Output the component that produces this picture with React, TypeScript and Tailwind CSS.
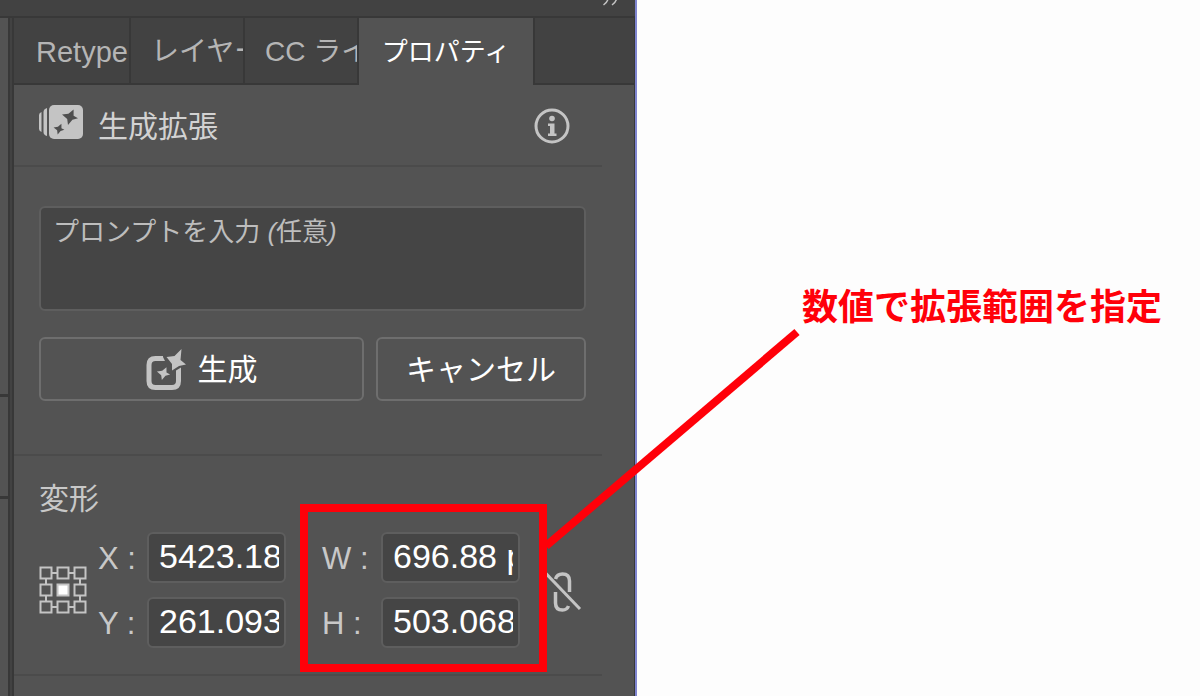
import type { ReactNode } from "react"
import { useState } from "react"

const tabs = [
  { id: "retype", label: "Retype", title: "Retype", className: "w-[117px] pl-[22px] text-[29px]" },
  { id: "layers", label: "レイヤー", title: "レイヤー", className: "w-[114px] pl-5 text-[28px]" },
  { id: "libraries", label: "CC ライ", title: "CC ライブラリ", className: "w-[114px] pl-5 text-[28px]" },
]

const SPARK = "M4.5 -9.5 L4.5 -1.5 L10 1.5 L3 3.5 L-2.5 10 L-3.5 2.5 L-10 -3 L-2 -4 Z"

function GenerativeExpandIcon() {
  return (
    <svg className="h-9 w-[46px] shrink-0" viewBox="0 0 46 36" aria-hidden="true">
      <path d="M2.5 9 Q0 10 0 12 V26 Q0 28 2.5 29 Z" fill="#c4c4c4" />
      <path d="M8 5 Q4.5 6 4.5 9 V29 Q4.5 32 8 33 Z" fill="#c4c4c4" />
      <rect x="10" y="2" width="34" height="34" rx="5" fill="#c4c4c4" />
      <path d={SPARK} transform="translate(31 14) scale(.8)" fill="#4f4f4f" />
      <path d={SPARK} transform="translate(20 26) scale(.54)" fill="#4f4f4f" />
    </svg>
  )
}

function GenerateIcon() {
  return (
    <svg className="h-[42px] w-10 shrink-0" viewBox="0 0 40 42" aria-hidden="true">
      <path
        d="M17 9.5 H9.5 Q3 9.5 3 16 V32 Q3 38.5 9.5 38.5 H26 Q32.5 38.5 32.5 32 V22"
        fill="none"
        stroke="#c4c4c4"
        strokeWidth="5"
      />
      <path d="M14 7 H16.5 L19 12 H14 Z" fill="#c4c4c4" />
      <path d="M30 23 V21.5 L35 18.5 V23 Z" fill="#c4c4c4" />
      <path d="M35.5 0 L34.5 11 L40 15.5 L33 17 L26 21.5 L26 15 L20.5 8 L28.5 7 Z" fill="#c4c4c4" />
      <path d={SPARK} transform="translate(17.5 24.5) scale(.66)" fill="#c4c4c4" />
    </svg>
  )
}

function InfoIcon() {
  return (
    <svg className="h-9 w-9" viewBox="0 0 36 36" fill="none" aria-hidden="true">
      <circle cx="18" cy="18" r="16" stroke="#c4c4c4" strokeWidth="3" />
      <circle cx="18" cy="10.5" r="2.8" fill="#c4c4c4" />
      <path d="M14 15.5 H20.5 V25.5 H22.5 V28 H14 V25.5 H16 V18 H14 Z" fill="#c4c4c4" />
    </svg>
  )
}

function ReferencePointIcon() {
  const steps = [2, 19, 36]
  return (
    <svg className="h-12 w-12" viewBox="0 0 48 48" fill="none" aria-hidden="true">
      <rect x="7" y="7" width="34" height="34" stroke="#c4c4c4" strokeWidth="2" />
      {steps.map((y) =>
        steps.map((x) => {
          const center = x === 19 && y === 19
          return (
            <rect
              key={`${x}-${y}`}
              x={x - 0.5}
              y={y - 0.5}
              width="11"
              height="11"
              fill={center ? "#ffffff" : "#535353"}
              stroke="#c4c4c4"
              strokeWidth="2"
            />
          )
        }),
      )}
    </svg>
  )
}

function UnlinkIcon() {
  return (
    <svg className="h-11 w-9" viewBox="0 0 36 44" fill="none" stroke="#c4c4c4" aria-hidden="true">
      <path d="M9.5 9 Q11 4 16.5 4 Q23.5 4 23.5 11 V22" strokeWidth="3.5" />
      <path d="M9.5 22 V33 Q9.5 40 16.5 40 Q21 40 22.5 36" strokeWidth="3.5" />
      <path d="M0 3.5 L34 39" strokeWidth="3" />
    </svg>
  )
}

function Section({ children, className }: { children: ReactNode; className: string }) {
  return <section className={`mr-8 border-b-2 border-[#4b4b4b] pr-4 pl-[25px] ${className}`}>{children}</section>
}

function NumberField({ id, label, value, labelWidth }: { id: string; label: string; value: string; labelWidth: string }) {
  const [text, setText] = useState(value)
  return (
    <div className="flex items-center">
      <label htmlFor={id} className={`shrink-0 pt-0.5 text-[31px] leading-none whitespace-pre text-[#c8c8c8] ${labelWidth}`}>
        {label} :
      </label>
      <input
        id={id}
        value={text}
        onChange={(e) => setText(e.target.value)}
        className="h-[51px] w-[139px] rounded-md border-2 border-[#5e5e5e] bg-[#454545] pr-[5px] pb-0.5 pl-[10px] text-[34px] leading-none text-white outline-none"
      />
    </div>
  )
}

export default function App() {
  const [active, setActive] = useState("properties")

  return (
    <div className="grid min-h-screen grid-cols-[637fr_563fr] overflow-hidden bg-[#fdfdfd] font-['Liberation_Sans','Noto_Sans_CJK_JP',sans-serif]">
      <aside className="relative z-10 flex flex-col border-r-2 border-[#7f85d0] bg-[#383838]">
        <div className="flex h-4 justify-end bg-[#424242] pr-[17px]">
          <button aria-label="パネルを折りたたむ" className="h-[6px] w-4">
            <svg className="h-[6px] w-4" viewBox="0 0 16 6" fill="none" stroke="#c4c4c4" strokeWidth="1.5">
              <path d="M6 -1 Q5.5 2 1.5 5" />
              <path d="M14.5 -1 Q14 2 10 5" />
            </svg>
          </button>
        </div>

        <div className="flex grow gap-[2px] pt-[2px]">
          {/* neighbouring dock column */}
          <div className="flex w-2 flex-col gap-[3px]">
            <div className="h-[376px] bg-[#535353]" />
            <div className="h-[99px] bg-[#535353]" />
            <div className="grow bg-[#535353]" />
          </div>
          <div className="w-[2px] bg-[#424242]" />

          <div className="mr-px flex min-w-0 grow flex-col bg-[#535353]">
            <div role="tablist" className="flex h-[67px] leading-none text-[#b5b5b5]">
              {tabs.map((tab) => (
                <button
                  key={tab.id}
                  role="tab"
                  aria-label={tab.title}
                  aria-selected={active === tab.id}
                  onClick={() => setActive(tab.id)}
                  className={`shrink-0 overflow-hidden border-r-2 border-b-2 border-[#383838] bg-[#424242] pt-0.5 text-left leading-[36px] whitespace-nowrap ${tab.className}`}
                >
                  {tab.label}
                </button>
              ))}
              <button
                role="tab"
                aria-selected={active === "properties"}
                onClick={() => setActive("properties")}
                className="w-[174px] shrink-0 text-[26px] text-white"
              >
                プロパティ
              </button>
              <div className="grow border-b-2 border-l-2 border-[#383838] bg-[#424242]" />
            </div>

            <Section className="flex h-[82px] items-center justify-between">
              <div className="flex items-center gap-[13px]">
                <div className="pb-2">
                  <GenerativeExpandIcon />
                </div>
                <h2 className="pt-1 text-[30px] leading-none text-[#d2d2d2]">生成拡張</h2>
              </div>
              <button aria-label="情報" className="mt-0.5 mr-4">
                <InfoIcon />
              </button>
            </Section>

            <Section className="pt-[39px] pb-[53px]">
              <textarea
                aria-label="プロンプト"
                placeholder="プロンプトを入力 (任意)"
                className="block h-[105px] w-full resize-none rounded-md border-2 border-[#5e5e5e] bg-[#454545] px-3 py-2 text-[26px] leading-[32px] text-white italic outline-none [font-synthesis:none] placeholder:text-[#bdbdbd]"
              />
              <div className="mt-[26px] flex h-16 gap-3 text-[30px] leading-none text-white">
                <button className="flex grow items-center justify-center gap-3 rounded-md border-2 border-[#6e6e6e] pt-0.5">
                  <GenerateIcon />
                  生成
                </button>
                <button className="w-[210px] rounded-md border-2 border-[#6e6e6e] pt-0.5">キャンセル</button>
              </div>
            </Section>

            <Section className="pt-7 pb-[26px]">
              <h2 className="text-[30px] leading-[30px] text-[#c8c8c8]">変形</h2>
              <div className="mt-[18px] flex items-center">
                <button aria-label="基準点" className="shrink-0">
                  <ReferencePointIcon />
                </button>
                <div className="ml-[11px] flex flex-col gap-[14px]">
                  <NumberField id="pos-x" label="X" value="5423.1875 px" labelWidth="w-[49px]" />
                  <NumberField id="pos-y" label="Y" value="261.0938 px" labelWidth="w-[49px]" />
                </div>
                <div className="relative z-10 ml-9 flex flex-col gap-[14px]">
                  <NumberField id="size-w" label="W" value="696.88 px" labelWidth="w-[59px]" />
                  <NumberField id="size-h" label="H" value="503.0681 px" labelWidth="w-[59px]" />
                  {/* callout frame and leader */}
                  <div className="pointer-events-none absolute -top-[28px] -right-[27px] -bottom-[24px] -left-[22px] border-8 border-[#ff0009]" />
                  <svg
                    className="pointer-events-none absolute bottom-[87px] left-full ml-[26px] h-[240px] w-[260px]"
                    viewBox="0 0 260 240"
                    aria-hidden="true"
                  >
                    <path d="M0 225 L251 11" stroke="#ff0009" strokeWidth="8" />
                  </svg>
                </div>
                <button aria-label="縦横比を固定" className="ml-[26px] shrink-0 pt-1">
                  <UnlinkIcon />
                </button>
              </div>
            </Section>
          </div>
        </div>
      </aside>

      <main className="pt-[289px] pl-[165px]">
        <p className="text-[36px] leading-[38px] font-bold whitespace-nowrap text-[#ff0009]">数値で拡張範囲を指定</p>
      </main>
    </div>
  )
}
